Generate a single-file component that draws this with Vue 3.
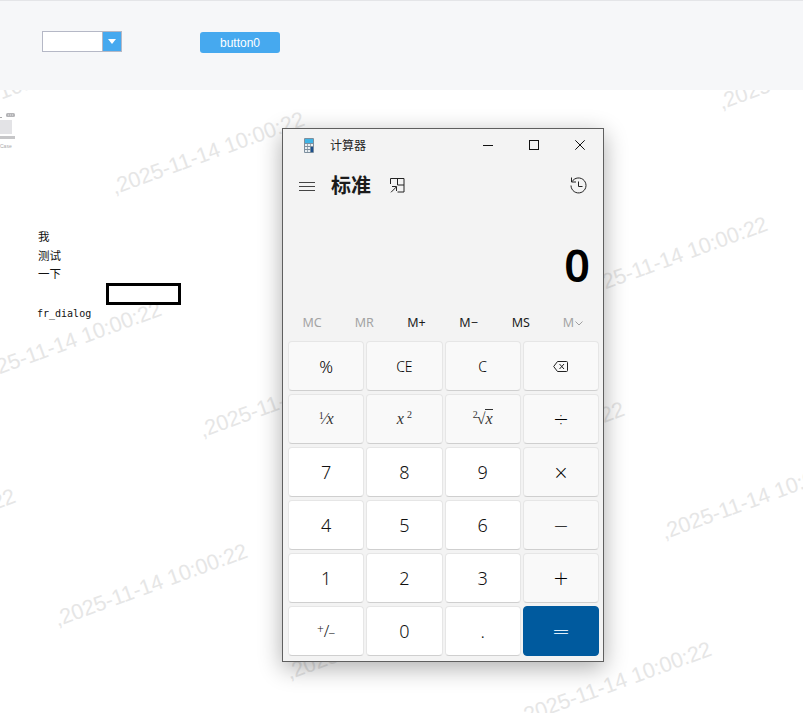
<script setup>
const marks = [
  { x: 112, y: 188 }, { x: 575, y: 293 }, { x: -31, y: 378 }, { x: 55, y: 620 },
  { x: 662, y: 533 }, { x: 200, y: 431 }, { x: 519, y: 718 }, { x: 719, y: 103 },
  { x: -177, y: 565 }, { x: 432, y: 478 }, { x: 287, y: 673 }, { x: -114, y: 134 },
];

const memory = [
  { label: "MC", off: true },
  { label: "MR", off: true },
  { label: "M+" },
  { label: "M−" },
  { label: "MS" },
  { label: "M﹀", off: true, kind: "list" },
];

const keys = [
  { label: "%", cls: "op big" },
  { label: "CE", cls: "op" },
  { label: "C", cls: "op" },
  { kind: "back", cls: "op" },
  { kind: "inv", cls: "op" },
  { kind: "square", cls: "op" },
  { kind: "root", cls: "op" },
  { label: "÷", cls: "op sign" },
  { label: "7", cls: "num" },
  { label: "8", cls: "num" },
  { label: "9", cls: "num" },
  { label: "×", cls: "op sign" },
  { label: "4", cls: "num" },
  { label: "5", cls: "num" },
  { label: "6", cls: "num" },
  { label: "−", cls: "op sign" },
  { label: "1", cls: "num" },
  { label: "2", cls: "num" },
  { label: "3", cls: "num" },
  { label: "+", cls: "op sign" },
  { kind: "negate", cls: "num" },
  { label: "0", cls: "num" },
  { label: ".", cls: "num" },
  { label: "=", cls: "equal sign" },
];
</script>

<template>
  <div class="page">
    <div
      v-for="(m, i) in marks"
      :key="i"
      class="mark"
      :style="{ left: m.x + 'px', top: m.y + 'px' }"
    >,2025-11-14 10:00:22</div>

    <header class="topbar">
      <div class="combo">
        <div class="combo-input"></div>
        <div class="combo-arrow"><span class="tri"></span></div>
      </div>
      <button class="btn">button0</button>
    </header>

    <main class="content">
      <svg class="thumb" width="16" height="40" viewBox="0 0 16 40">
        <rect x="6" y="1" width="9" height="4" rx="1.5" fill="#b5b5b8" />
        <path d="M8 3h5" stroke="#e8e8e8" stroke-dasharray="1 1" fill="none" />
        <rect x="0" y="5" width="2" height="1" fill="#aaa" />
        <rect x="0" y="8" width="12" height="14" fill="#e3e3e6" />
        <rect x="0" y="24" width="15" height="3" fill="#c6c6c8" />
        <text x="0" y="36" class="thumb-text">Case</text>
      </svg>
      <div class="labels">
        <div>我</div>
        <div>测试</div>
        <div>一下</div>
      </div>
      <div class="blackbox"></div>
      <div class="dialog-name">fr_dialog</div>
    </main>

    <section class="calc">
      <div class="titlebar">
        <svg class="appicon" width="10" height="15" viewBox="0 0 10 15">
          <rect width="10" height="15" rx="1" fill="#7d8f9e" />
          <rect x="1" y="1" width="8" height="4" fill="#3fb4e6" />
          <rect x="1" y="6" width="2.2" height="2" fill="#e8eef2" />
          <rect x="3.9" y="6" width="2.2" height="2" fill="#e8eef2" />
          <rect x="6.8" y="6" width="2.2" height="2" fill="#e8eef2" />
          <rect x="1" y="9" width="2.2" height="2" fill="#e8eef2" />
          <rect x="3.9" y="9" width="2.2" height="2" fill="#e8eef2" />
          <rect x="1" y="12" width="2.2" height="2" fill="#e8eef2" />
          <rect x="3.9" y="12" width="2.2" height="2" fill="#e8eef2" />
          <rect x="6.8" y="9" width="2.2" height="5" fill="#1c4f8c" />
        </svg>
        <span class="apptitle">计算器</span>
        <div class="winbtns">
          <svg width="10" height="10" viewBox="0 0 10 10"><path d="M0 5.5h10" stroke="#111" fill="none" /></svg>
          <svg width="10" height="10" viewBox="0 0 10 10"><rect x=".5" y=".5" width="9" height="9" stroke="#111" fill="none" /></svg>
          <svg width="10" height="10" viewBox="0 0 10 10"><path d="M.3.3l9.4 9.4M9.7.3L.3 9.7" stroke="#111" fill="none" /></svg>
        </div>
      </div>

      <div class="calc-head">
        <svg class="menu" width="16" height="9" viewBox="0 0 16 9">
          <path d="M0 .5h16M0 4.5h16M0 8.5h16" stroke="#444" fill="none" />
        </svg>
        <span class="mode">标准</span>
        <svg class="keep" width="15" height="15" viewBox="0 0 15 15">
          <path d="M.5 6V.5H14V14H7.5M7.5.5V7H14M1 14.3L6.5 8.8M2 8.5h4.5V13" stroke="#222" fill="none" />
        </svg>
        <svg class="history" width="17" height="17" viewBox="0 0 17 17">
          <path d="M1.5.5v4.5H6M2 4.7A7.5 7.5 0 1 1 1 8.5M8.5 4.5v5h4" stroke="#222" fill="none" />
        </svg>
      </div>

      <div class="display">0</div>

      <div class="memory">
        <span v-for="m in memory" :key="m.label" :class="{ off: m.off }">
          <template v-if="m.kind === 'list'">M<svg width="8" height="5" viewBox="0 0 8 5"><path d="M.5.5L4 4 7.5.5" stroke="#a0a0a0" fill="none" /></svg></template>
          <template v-else>{{ m.label }}</template>
        </span>
      </div>

      <div class="keypad">
        <div v-for="(k, i) in keys" :key="i" class="key" :class="k.cls">
          <svg v-if="k.kind === 'back'" width="15" height="11" viewBox="0 0 15 11">
            <path d="M4.5.5h9a1 1 0 0 1 1 1v8a1 1 0 0 1-1 1h-9L.7 5.5zM6.5 3l4.5 5M11 3L6.5 8" stroke="#222" fill="none" />
          </svg>
          <span v-else-if="k.kind === 'inv'" class="formula"><sup class="mini">1</sup>⁄<i>x</i></span>
          <span v-else-if="k.kind === 'square'" class="formula"><i>x</i><sup class="sq">2</sup></span>
          <span v-else-if="k.kind === 'root'" class="formula"><sup class="mini tuck">2</sup><span class="radical">√</span><i class="over">x</i></span>
          <span v-else-if="k.kind === 'negate'" class="negate"><sup>+</sup>/<sub>−</sub></span>
          <template v-else>{{ k.label }}</template>
        </div>
      </div>
    </section>
  </div>
</template>

<style>
html,
body {
  margin: 0;
  background: #fff;
}
</style>

<style scoped>
.page {
  position: relative;
  width: 803px;
  height: 713px;
  overflow: hidden;
  background: #fff;
  font-family: "Liberation Sans", Arial, sans-serif;
}

.mark {
  position: absolute;
  font-size: 21.5px;
  line-height: 24px;
  margin-top: -12px;
  color: #e6e6e6;
  white-space: nowrap;
  transform: rotate(-20deg);
  transform-origin: left center;
  user-select: none;
}

.topbar {
  position: relative;
  height: 89px;
  border-top: 1px solid #e4e5e8;
  background: #f6f7f9;
  display: flex;
  align-items: flex-start;
}

.combo {
  display: flex;
  width: 80px;
  height: 21px;
  margin: 30px 0 0 42px;
  box-sizing: border-box;
  border: 1px solid #b5b8c6;
  background: #fff;
}

.combo-input {
  flex: 1;
  border-right: 1px solid #b5b8c6;
}

.combo-arrow {
  width: 18px;
  background: #46a9ef;
  display: flex;
  align-items: center;
  justify-content: center;
}

.tri {
  width: 0;
  height: 0;
  border-left: 4.5px solid transparent;
  border-right: 4.5px solid transparent;
  border-top: 5px solid #fff;
}

.btn {
  width: 80px;
  height: 21px;
  margin: 31px 0 0 78px;
  padding: 0;
  border: 0;
  border-radius: 3px;
  background: #46a9ef;
  color: #fff;
  font-family: "Liberation Sans", Arial, sans-serif;
  font-size: 12px;
}

.content {
  position: relative;
  padding-left: 38px;
}

.thumb {
  display: block;
  margin: 22px 0 0 -38px;
}

.thumb-text {
  font-family: "Liberation Sans", sans-serif;
  font-size: 5px;
  fill: #a9a9ab;
}

.labels {
  margin-top: 75px;
  font-family: "Noto Sans CJK SC", sans-serif;
  font-size: 11.5px;
  line-height: 18.5px;
  color: #111;
}

.blackbox {
  width: 75px;
  height: 22px;
  box-sizing: border-box;
  margin: 0 0 0 68px;
  border: 3px solid #000;
}

.dialog-name {
  margin: 3px 0 0 -1px;
  font-family: "DejaVu Sans Mono", monospace;
  font-size: 10px;
  line-height: 12px;
  color: #111;
}

.calc {
  position: absolute;
  left: 282px;
  top: 128px;
  width: 322px;
  height: 534px;
  box-sizing: border-box;
  border: 1px solid #5f5f5f;
  background: #f3f3f3;
  box-shadow: 0 6px 22px rgba(0, 0, 0, 0.32);
  display: flex;
  flex-direction: column;
  font-family: "Noto Sans", "Noto Sans CJK SC", sans-serif;
  color: #1b1b1b;
}

.titlebar {
  height: 32px;
  display: flex;
  align-items: center;
  padding-left: 21px;
}

.apptitle {
  margin: -2px 0 0 16px;
  font-family: "Noto Sans CJK SC", sans-serif;
  font-size: 12px;
  color: #222;
}

.winbtns {
  margin-left: auto;
  margin-right: 18px;
  display: flex;
  gap: 36px;
}

.calc-head {
  height: 48px;
  display: flex;
  align-items: center;
  padding-left: 16px;
}

.menu {
  margin-top: 3px;
}

.mode {
  margin: -2px 0 0 16px;
  font-family: "Noto Sans CJK SC", sans-serif;
  font-size: 20px;
  font-weight: 700;
  color: #1b1b1b;
}

.keep {
  margin-left: 19px;
}

.history {
  margin-left: auto;
  margin-right: 16px;
}

.display {
  flex: 1;
  text-align: right;
  padding: 24px 13px 0 0;
  font-size: 45px;
  line-height: 64px;
  font-weight: 600;
  color: #000;
}

.memory {
  height: 28px;
  margin: 0 4px 5px 3px;
  display: grid;
  grid-template-columns: repeat(6, 1fr);
  align-items: center;
  justify-items: center;
  font-size: 12.5px;
  color: #1b1b1b;
}

.memory .off {
  color: #a3a3a3;
}

.memory svg {
  margin-left: 1px;
  vertical-align: 1px;
}

.keypad {
  display: grid;
  grid-template-columns: repeat(4, 1fr);
  grid-auto-rows: 50px;
  gap: 3px 2px;
  padding: 0 4px 5px 5px;
}

.key {
  display: flex;
  align-items: center;
  justify-content: center;
  box-sizing: border-box;
  border: 1px solid #e6e6e6;
  border-bottom-color: #cfcfcf;
  border-radius: 4px;
  font-size: 14px;
  font-weight: 300;
  color: #000;
}

.key.op {
  background: #f9f9f9;
}

.key.num {
  background: #fff;
  font-size: 18px;
  color: #111;
}

.key.big {
  font-size: 17px;
}

.key.sign {
  font-family: "DejaVu Sans", sans-serif;
  font-weight: 200;
  font-size: 19px;
  color: #000;
}

.key.equal {
  background: #005a9e;
  border-color: #005a9e;
  color: #dfeefa;
  font-size: 22px;
}

.formula {
  font-family: "Liberation Serif", serif;
  font-size: 16px;
  color: #333;
}

.mini {
  font-size: 10px;
  line-height: 0;
  vertical-align: 5px;
}

.tuck {
  position: relative;
  top: -1px;
  margin-right: -1px;
}

.sq {
  font-size: 10px;
  line-height: 0;
  vertical-align: 6px;
  margin-left: 3px;
}

.over {
  border-top: 1px solid #333;
}

.negate {
  font-size: 16px;
  color: #222;
}

.negate sup,
.negate sub {
  font-size: 12px;
  line-height: 0;
  vertical-align: 3px;
}

.negate sub {
  vertical-align: -1px;
  margin-left: -1px;
}
</style>
